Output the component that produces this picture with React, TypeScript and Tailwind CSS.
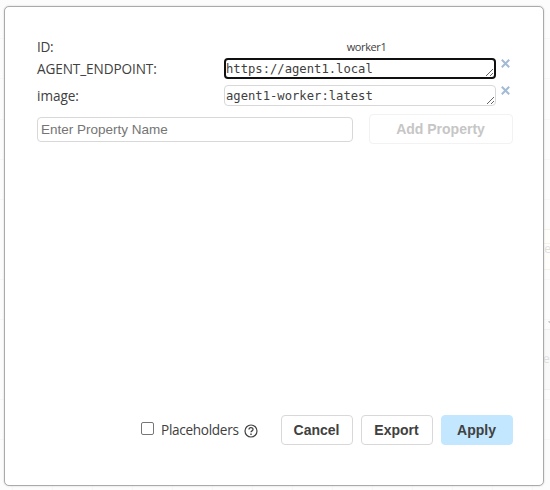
import React from 'react';

const uiFont = "font-['Open_Sans','Noto_Sans',sans-serif]";
const buttonBase =
  "box-border h-[30px] rounded-[4px] border pr-px font-['Liberation_Sans',Arial,sans-serif] text-[14px] font-bold leading-[28px]";

function CanvasBackdrop() {
  return (
    <svg className="absolute inset-0" width="550" height="490" aria-hidden="true">
      <rect width="550" height="490" fill="#fcfcfc" />
      <path
        d="M0 38.5H550M0 78.5H550M0 119.5H550M0 159.5H550M0 199.5H550M0 279.5H550M0 319.5H550M0 399.5H550M0 439.5H550M12.5 486V490M52.5 486V490M92.5 486V490M132.5 486V490M172.5 486V490M212.5 486V490M252.5 486V490M292.5 486V490M332.5 486V490M372.5 486V490M412.5 486V490M452.5 486V490M492.5 486V490M532.5 486V490"
        stroke="#f7f7f7"
      />
      <rect x="500" y="229.5" width="60" height="40" fill="#fffefa" stroke="#f5f3e9" />
      <path d="M500 243.5H550" stroke="#f5f3e9" />
      <rect x="500" y="329.5" width="60" height="60" fill="#f9f9f9" stroke="#f0f0f0" />
      <path d="M548 321h2v2h-1z" fill="#cccccc" />
      <g fill="#dedede" fontFamily="Open Sans, sans-serif" fontSize="12">
        <text x="540" y="253">te</text>
        <text x="543" y="363">e</text>
      </g>
    </svg>
  );
}

function RemoveIcon() {
  return (
    <svg width="9" height="9" viewBox="0 0 9 9" aria-hidden="true">
      <path d="M.8.8 8.2 8.2M8.2.8.8 8.2" stroke="#a3bad4" strokeWidth="2" />
    </svg>
  );
}

function ValueField({ value, active }: { value: string; active?: boolean }) {
  return (
    <div className="flex w-[289px] items-start">
      <textarea
        defaultValue={value}
        spellCheck={false}
        rows={1}
        className={
          "box-border block h-[21px] w-[272px] resize overflow-hidden rounded-[4px] bg-white font-['DejaVu_Sans_Mono','Liberation_Mono',monospace] text-[12.2px] leading-[15px] text-[#404040] outline-none " +
          (active
            ? 'border-2 border-[#101010] pb-0 pl-0 pr-px pt-[2px]'
            : 'border border-[#d8d8d8] pb-0 pl-px pr-[2px] pt-[3px]')
        }
      />
      <button className="ml-[5px] mt-px block h-[9px] w-[9px]" aria-label="Remove">
        <RemoveIcon />
      </button>
    </div>
  );
}

export default function App() {
  return (
    <div className="relative h-[490px] w-[550px] overflow-hidden bg-[#fcfcfc] pl-[4px] pt-[6px]">
      <CanvasBackdrop />
      <div
        className={`${uiFont} relative box-border flex h-[480px] w-[540px] flex-col justify-between rounded-[5px] border border-[#aaaaaa] bg-white pb-[40px] pl-[32px] pr-[30px] pt-[30px] text-[13.6px] text-[#404040] shadow-[0_0_2px_#cccccc]`}
      >
        <div>
          <div className="flex h-[21px] items-start">
            <span className="w-[187px] leading-[19px] tracking-[-0.3px]">ID:</span>
            <span className="w-[285px] text-center text-[11px] leading-[20px] tracking-[-0.4px]">worker1</span>
          </div>
          <div className="flex h-[27px] items-start">
            <span className="w-[187px] leading-[21px] tracking-[-0.1px]">AGENT_ENDPOINT:</span>
            <ValueField value="https://agent1.local" active />
          </div>
          <div className="flex h-[29px] items-start">
            <span className="w-[187px] leading-[21px] tracking-[-0.05px]">image:</span>
            <ValueField value="agent1-worker:latest" />
          </div>
          <div className="flex items-center gap-[16px]">
            <input
              placeholder="Enter Property Name"
              className="box-border h-[25px] w-[316px] rounded-[4px] border border-[#d8d8d8] bg-white px-[3px] font-['Liberation_Sans',Arial,sans-serif] text-[13.5px] outline-none placeholder:text-[#757575]"
            />
            <button className={`${buttonBase} w-[144px] border-[#f2f2f2] text-[#c6c6c6]`}>
              Add Property
            </button>
          </div>
        </div>

        <div className="flex items-center justify-end gap-[8px]">
          <label className="mr-[15px] flex items-center">
            <input
              type="checkbox"
              className="-mt-[3px] mr-[7px] box-border h-[13px] w-[13px] appearance-none rounded-[2px] border border-[#767676] bg-white"
            />
            <span className="w-[83px] leading-[20px] tracking-[-0.3px]">Placeholders</span>
            <svg className="mt-px" width="14" height="14" viewBox="0 0 14 14" fill="none" stroke="#404040" aria-label="Help">
              <circle cx="7" cy="7" r="6" strokeWidth="1.2" />
              <path d="M5 5.5C5 3 9 3 9 5.4C9 6.9 7 6.8 7 8.3" strokeWidth="1.3" />
              <path d="M7 9.5v1.4" strokeWidth="1.4" />
            </svg>
          </label>
          <button className={`${buttonBase} w-[72px] border-[#d8d8d8] bg-white`}>Cancel</button>
          <button className={`${buttonBase} w-[72px] border-[#d8d8d8] bg-white`}>Export</button>
          <button className={`${buttonBase} w-[72px] border-[#c2e7ff] bg-[#c2e7ff]`}>Apply</button>
        </div>
      </div>
    </div>
  );
}
